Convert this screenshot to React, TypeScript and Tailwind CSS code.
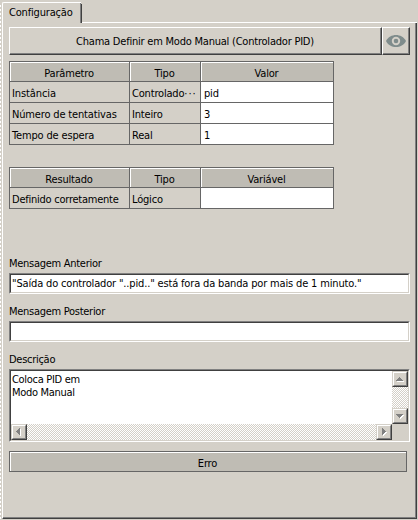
import React from "react";

type RowData = { name: string; type: string; value: string; nameSpacing: string; more?: boolean };

const parameters: RowData[] = [
  { name: "Instância", type: "Controlado", value: "pid", nameSpacing: "tracking-[-0.1px]", more: true },
  { name: "Número de tentativas", type: "Inteiro", value: "3", nameSpacing: "tracking-[-0.16px]" },
  { name: "Tempo de espera", type: "Real", value: "1", nameSpacing: "tracking-[-0.16px]" },
];

const results: RowData[] = [
  { name: "Definido corretamente", type: "Lógico", value: "", nameSpacing: "tracking-[-0.24px]" },
];

function HeaderCell({ children }: { children: React.ReactNode }) {
  return (
    <div className="flex h-[19px] items-center justify-center border-l border-t border-white bg-[#bfbcb4] pr-[2px] pt-[3px]">
      {children}
    </div>
  );
}

function Grid({ heads, rows }: { heads: string[]; rows: RowData[] }) {
  return (
    <div className="grid w-[325px] grid-cols-[119px_70px_132px] gap-px border border-[#666] bg-[#666]">
      {heads.map((h) => (
        <HeaderCell key={h}>{h}</HeaderCell>
      ))}
      {rows.map((r) => (
        <React.Fragment key={r.name}>
          <div className={`flex h-5 items-center bg-[#d4d0c8] pl-0.5 pt-[3px] ${r.nameSpacing}`}>{r.name}</div>
          <div className="flex h-5 items-center overflow-hidden bg-[#d4d0c8] pl-0.5 pt-[3px]">
            {r.type}
            {r.more && <span className="tracking-[0.9px]">···</span>}
          </div>
          <div className="flex h-5 items-center bg-white pl-[3px] pt-[3px]">{r.value}</div>
        </React.Fragment>
      ))}
    </div>
  );
}

function Sunken({ className, children }: { className: string; children?: React.ReactNode }) {
  return (
    <div className={`w-[401px] border border-b-white border-l-[#808080] border-r-white border-t-[#808080] ${className}`}>
      <div className="h-full border border-b-[#d4d0c8] border-l-[#404040] border-r-[#d4d0c8] border-t-[#404040] bg-white">
        {children}
      </div>
    </div>
  );
}

function Raised({ className, children }: { className: string; children: React.ReactNode }) {
  return (
    <div className={`h-7 border border-b-[#404040] border-l-white border-r-[#404040] border-t-white ${className}`}>
      <div className="flex h-full items-center justify-center border-b border-r border-[#808080]">{children}</div>
    </div>
  );
}

function ScrollButton({ d }: { d: string }) {
  return (
    <div className="size-4 shrink-0 border border-b-[#404040] border-l-[#d4d0c8] border-r-[#404040] border-t-[#d4d0c8] bg-[#d4d0c8]">
      <div className="size-full border border-b-[#808080] border-l-white border-r-[#808080] border-t-white">
        <svg width="12" height="12" viewBox="0 0 12 12" shapeRendering="crispEdges" className="block">
          <path d={d} transform="translate(1 1)" fill="#fff" />
          <path d={d} fill="#808080" />
        </svg>
      </div>
    </div>
  );
}

const arrows = {
  up: "M5 4h1v1h1v1h1v1h1v1h-7v-1h1v-1h1v-1h1z",
  down: "M2 4h7v1h-1v1h-1v1h-1v1h-1v-1h-1v-1h-1v-1h-1z",
  left: "M7 2v7h-1v-1h-1v-1h-1v-1h-1v-1h1v-1h1v-1h1v-1z",
  right: "M4 2v7h1v-1h1v-1h1v-1h1v-1h-1v-1h-1v-1h-1v-1z",
};

const track =
  "bg-[repeating-conic-gradient(#fff_0_25%,#d4d0c8_0_50%)] bg-[length:2px_2px]";

export default function App() {
  return (
    <div className="flex h-[520px] w-[418px] whitespace-pre bg-[#d4d0c8] font-['DejaVu_Sans_Condensed','DejaVu_Sans',sans-serif] text-[11px] leading-[13px] tracking-[-0.18px] text-black [font-stretch:condensed]">
      <div className="mt-[5px] w-px bg-[repeating-linear-gradient(#fff_0_2px,#d4d0c8_2px_4px)]" />
      <div className="ml-px flex w-[415px] flex-col pt-0.5">
        <div className="flex h-[21px]">
          <div className="w-[79px] rounded-tl-[2px] border-l border-t border-white">
            <div className="h-full border-r border-[#808080] pl-1.5 pt-[3px]">Configuração</div>
          </div>
          <div className="mt-0.5 w-px bg-[#404040]" />
          <div className="mt-5 h-px grow bg-white" />
        </div>
        <div className="h-[496px] border-b border-l border-r border-b-[#404040] border-l-white border-r-[#404040]">
          <div className="flex h-full flex-col border-b border-r border-[#808080] pl-1.5 pt-1">
            <div className="flex">
              <Raised className="w-[373px]">
                <span className="pt-0.5 tracking-[-0.22px]">Chama Definir em Modo Manual (Controlador PID)</span>
              </Raised>
              <Raised className="w-7">
                <svg width="20" height="12" viewBox="0 0 20 12" className="block">
                  <path
                    fillRule="evenodd"
                    fill="#7f8c8c"
                    d="M0 6C2 2 6 0 10 0s8 2 10 6c-2 4-6 6-10 6S2 10 0 6zM10 1.8a4.2 4.2 0 1 0 0 8.4a4.2 4.2 0 1 0 0-8.4zM10 3.7a2.3 2.3 0 1 1 0 4.6a2.3 2.3 0 1 1 0-4.6z"
                  />
                </svg>
              </Raised>
            </div>
            <div className="mt-1.5">
              <Grid heads={["Parâmetro", "Tipo", "Valor"]} rows={parameters} />
            </div>
            <div className="mt-[22px]">
              <Grid heads={["Resultado", "Tipo", "Variável"]} rows={results} />
            </div>
            <div className="mt-12 tracking-[-0.28px]">Mensagem Anterior</div>
            <Sunken className="mt-[3px] h-[21px]">
              <div className="pl-px pt-0.5 tracking-[-0.16px]">"Saída do controlador "..pid.." está fora da banda por mais de 1 minuto."</div>
            </Sunken>
            <div className="mt-[11px] tracking-[-0.28px]">Mensagem Posterior</div>
            <Sunken className="mt-[3px] h-[21px]" />
            <div className="mt-[11px] tracking-[-0.28px]">Descrição</div>
            <Sunken className="mt-[3px] h-[73px]">
              <div className="grid h-full grid-cols-[381px_16px] grid-rows-[53px_16px]">
                <div className="pl-px pt-0.5 tracking-[-0.3px]">{"Coloca PID em\nModo Manual"}</div>
                <div className={`flex flex-col justify-between ${track}`}>
                  <ScrollButton d={arrows.up} />
                  <ScrollButton d={arrows.down} />
                </div>
                <div className={`flex justify-between ${track}`}>
                  <ScrollButton d={arrows.left} />
                  <ScrollButton d={arrows.right} />
                </div>
                <div className="bg-[#d4d0c8]" />
              </div>
            </Sunken>
            <div className="mt-[9px] w-[398px] border border-[#666]">
              <HeaderCell>Erro</HeaderCell>
            </div>
          </div>
        </div>
      </div>
    </div>
  );
}
